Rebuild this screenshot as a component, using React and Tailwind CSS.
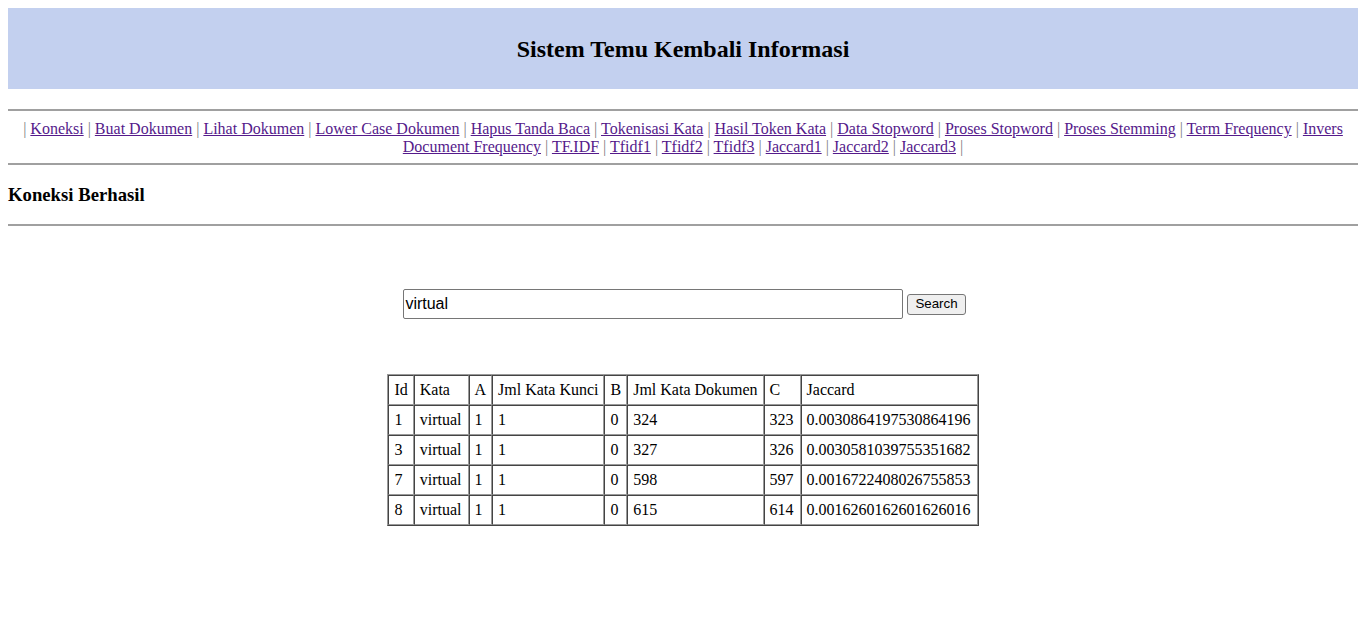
import React from 'react';

const links = [
  'Koneksi', 'Buat Dokumen', 'Lihat Dokumen', 'Lower Case Dokumen', 'Hapus Tanda Baca',
  'Tokenisasi Kata', 'Hasil Token Kata', 'Data Stopword', 'Proses Stopword', 'Proses Stemming',
  'Term Frequency', 'Invers Document Frequency', 'TF.IDF', 'Tfidf1', 'Tfidf2', 'Tfidf3',
  'Jaccard1', 'Jaccard2', 'Jaccard3',
];

const headers = ['Id', 'Kata', 'A', 'Jml Kata Kunci', 'B', 'Jml Kata Dokumen', 'C', 'Jaccard'];

const rows = [
  ['1', 'virtual', '1', '1', '0', '324', '323', '0.0030864197530864196'],
  ['3', 'virtual', '1', '1', '0', '327', '326', '0.0030581039755351682'],
  ['7', 'virtual', '1', '1', '0', '598', '597', '0.0016722408026755853'],
  ['8', 'virtual', '1', '1', '0', '615', '614', '0.0016260162601626016'],
];

const Rule = ({ className = '' }) => (
  <div className={`border-t-2 border-[#a0a0a0] ${className}`} />
);

const App = () => {
  return (
    <div className="min-h-[625px] bg-white p-2 font-['Liberation_Serif',serif] text-black">
      {/* Header */}
      <div className="h-[81px] bg-[#c3d0ef] flex items-center justify-center">
        <h2 className="text-[24px] font-bold leading-none">Sistem Temu Kembali Informasi</h2>
      </div>

      <Rule className="mt-5" />

      {/* Menu */}
      <div className="mt-2 text-center text-[16px] leading-[18px] py-[1px]">
        <span className="text-[#808080]">| </span>
        {links.map((l) => (
          <React.Fragment key={l}>
            <a href="#" className="text-[#551a8b] underline">{l}</a>
            <span className="text-[#808080]"> | </span>
          </React.Fragment>
        ))}
      </div>

      <Rule className="mt-[6px]" />

      <h3 className="mt-[19px] text-[18.72px] font-bold leading-[22px]">Koneksi Berhasil</h3>

      <Rule className="mt-[18px]" />

      {/* Search */}
      <div className="mt-[63px] flex justify-center items-center gap-1 pl-[3px]">
        <input
          type="text"
          defaultValue="virtual"
          className="w-[500px] h-[30px] border border-[#767676] rounded-[2px] px-[1px] font-['Liberation_Sans',sans-serif] text-[16px] text-black outline-none"
        />
        <button className="h-[21px] px-[7px] border border-[#767676] rounded-[3px] bg-[#efefef] font-['Liberation_Sans',sans-serif] text-[13.33px] leading-none">
          Search
        </button>
      </div>

      {/* Result table */}
      <div className="mt-[55px] flex justify-center">
        <table className="border-separate border-spacing-0 border border-t-[#9a9a9a] border-l-[#9a9a9a] border-r-[#444] border-b-[#444] text-[16px] leading-[18px]">
          <thead>
            <tr>
              {headers.map((h) => (
                <td key={h} className="p-[5px] border border-t-[#444] border-l-[#444] border-r-[#9a9a9a] border-b-[#9a9a9a] whitespace-nowrap">{h}</td>
              ))}
            </tr>
          </thead>
          <tbody>
            {rows.map((r) => (
              <tr key={r[0]}>
                {r.map((c, i) => (
                  <td key={i} className="p-[5px] pr-[6px] border border-t-[#444] border-l-[#444] border-r-[#9a9a9a] border-b-[#9a9a9a] whitespace-nowrap">{c}</td>
                ))}
              </tr>
            ))}
          </tbody>
        </table>
      </div>
    </div>
  );
};

export default App;
